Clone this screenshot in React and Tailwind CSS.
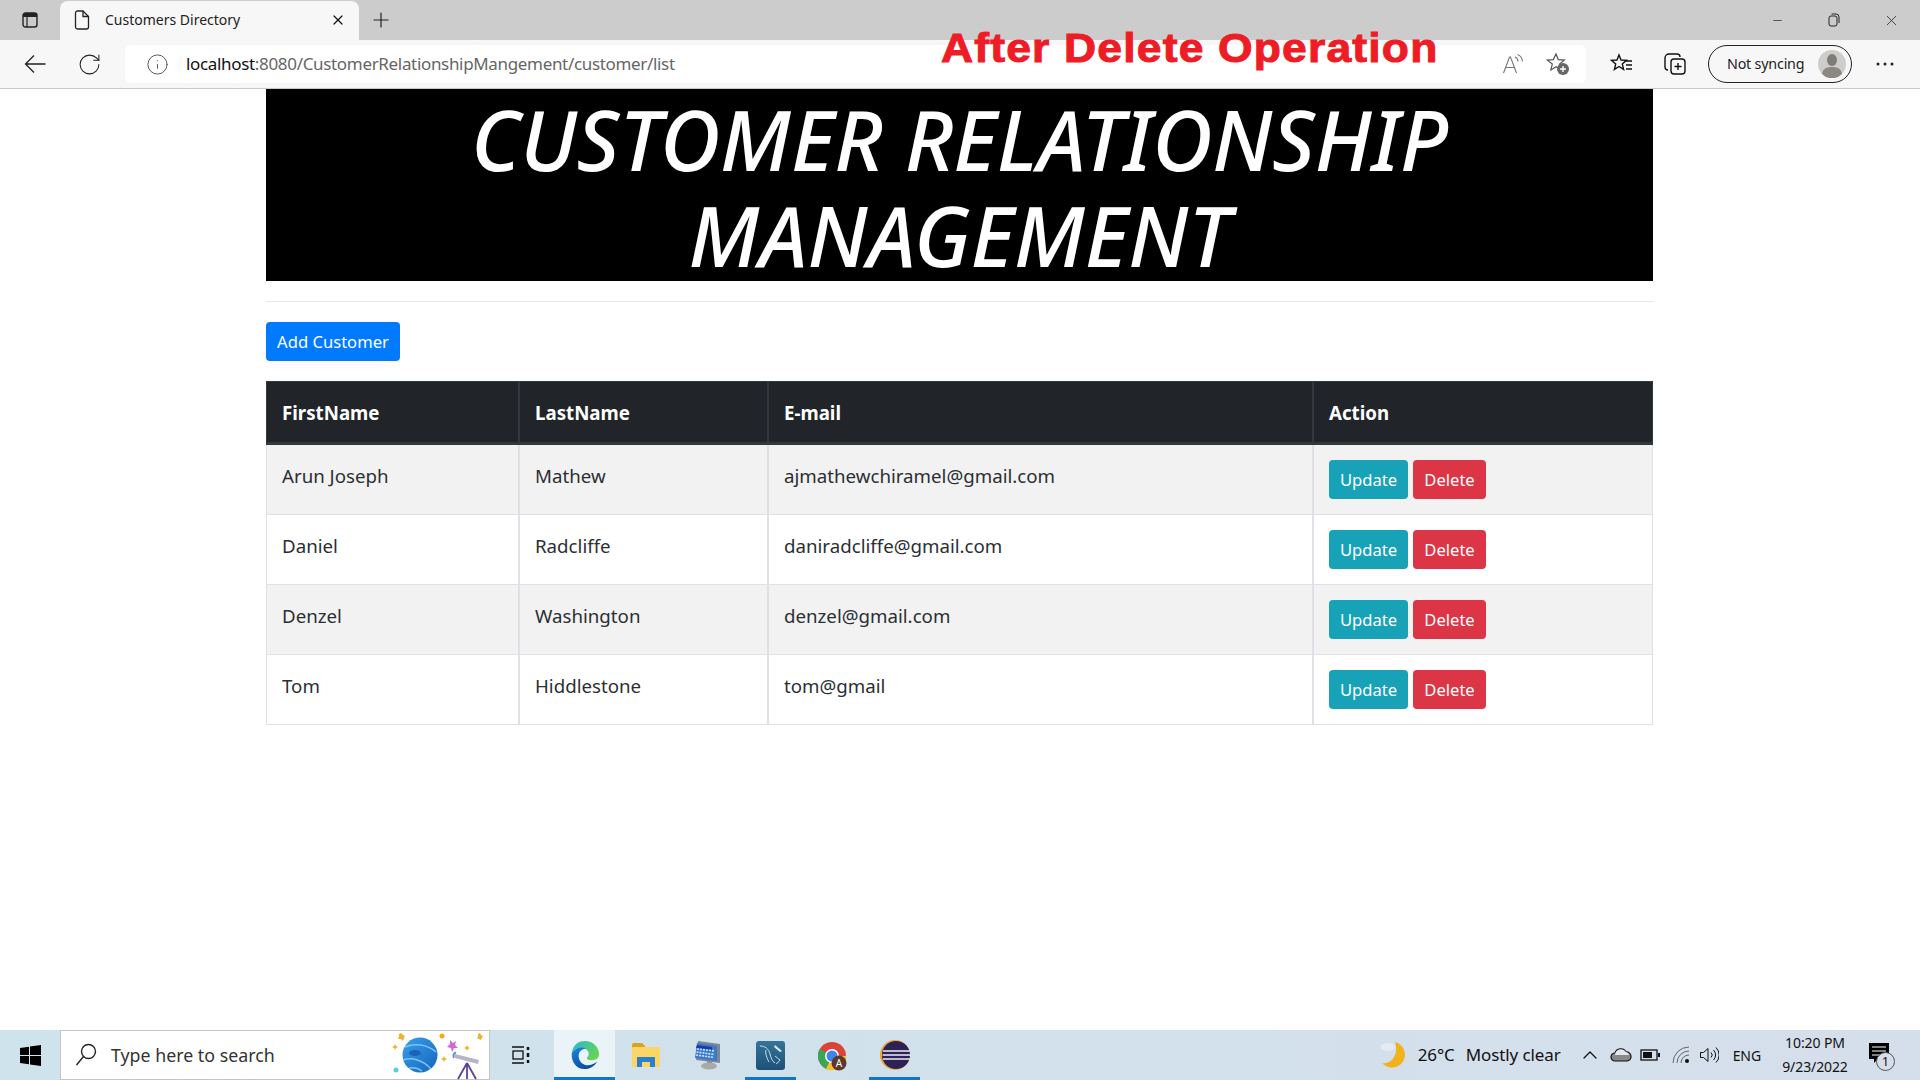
import { RotateCw, Info, X, Plus, Minus, ChevronUp } from 'lucide-react';

const customers = [
  { first: 'Arun Joseph', last: 'Mathew', email: 'ajmathewchiramel@gmail.com' },
  { first: 'Daniel', last: 'Radcliffe', email: 'daniradcliffe@gmail.com' },
  { first: 'Denzel', last: 'Washington', email: 'denzel@gmail.com' },
  { first: 'Tom', last: 'Hiddlestone', email: 'tom@gmail' },
];

function PageIcon() {
  return (
    <svg width="16" height="20" viewBox="0 0 16 20" fill="none" stroke="#222" strokeWidth="1.3">
      <path d="M1.500 3a2 2 0 0 1 2-2h5.500l5.500 5.500V17a2 2 0 0 1-2 2h-9a2 2 0 0 1-2-2z" />
      <path d="M9 1v5.500h5.500" />
    </svg>
  );
}

function SidebarIcon() {
  return (
    <svg width="16" height="16" viewBox="0 0 16 16" fill="none">
      <rect x="1" y="1" width="14" height="14" rx="2.500" stroke="#222" strokeWidth="1.400" />
      <path d="M1 3.500a2.500 2.500 0 0 1 2.500-2.500h9A2.500 2.500 0 0 1 15 3.500V5H1z" fill="#222" />
      <path d="M5 5v10" stroke="#222" strokeWidth="1.200" />
    </svg>
  );
}

function TitleBar() {
  return (
    <div className="flex h-10 items-end bg-[#cccccc]">
      <div className="flex h-10 w-[60px] items-center justify-center">
        <SidebarIcon />
      </div>
      <div className="flex h-[39px] w-[299px] items-center rounded-t-lg bg-[#f7f7f7] pb-[2px] pl-[14px] pr-[13px]">
        <PageIcon />
        <span className="ml-[15px] flex-1 text-[14px] text-[#222]">Customers Directory</span>
        <X size={16} color="#111" strokeWidth={1.8} />
      </div>
      <div className="flex h-10 w-[44px] items-center justify-center">
        <Plus size={24} color="#222" strokeWidth={1.200} />
      </div>
      <div className="flex-1" />
      <div className="flex h-10 items-center">
        <div className="flex w-[58px] justify-center">
          <Minus size={13} color="#222" strokeWidth={1.300} />
        </div>
        <div className="flex w-[58px] justify-center pr-[2px]">
          <svg width="12" height="14" viewBox="0 0 12 14" fill="none" stroke="#222" strokeWidth="1">
            <rect x="1" y="3" width="8" height="10" rx="2" />
            <path d="M3.500 1h4.500a3 3 0 0 1 3 3v6" />
          </svg>
        </div>
        <div className="flex w-[56px] justify-center pr-[2px]">
          <X size={17} color="#222" strokeWidth={1.100} />
        </div>
      </div>
    </div>
  );
}

function Toolbar() {
  return (
    <div className="relative flex h-[49px] items-center border-b border-b-[#c9c9c9] bg-[#f7f7f7]">
      <div className="flex w-[125px] items-center pl-[24px]">
        <svg width="22" height="20" viewBox="0 0 22 20" fill="none" stroke="#222" strokeWidth="1.300">
          <path d="M21.500 10H1.500M10 1.500 1.500 10l8.500 8.500" />
        </svg>
        <RotateCw size={25} color="#222" strokeWidth={1} className="ml-[31px]" />
      </div>
      <div className="flex h-[38px] w-[1461px] items-center rounded-md bg-white pl-[21px] pr-[16px]">
        <Info size={23} color="#555" strokeWidth={1} />
        <span className="ml-[17px] flex-1 text-[17px] tracking-[-0.33px] text-[#666]">
          <span className="text-[#111]">localhost</span>:8080/CustomerRelationshipMangement/customer/list
        </span>
        <svg width="22" height="22" viewBox="0 0 22 22" fill="none" stroke="#777" strokeWidth="1.100">
          <path d="M1.500 20 7.500 4h1l6 16M4 14.500h9" />
          <path d="M13 4a5 5 0 0 1 3 4.500M15.500 1.500a8 8 0 0 1 5 7" />
        </svg>
        <svg width="24" height="24" viewBox="0 0 24 24" fill="none" className="ml-[22px]">
          <path d="M10 2l2.300 5.600 6 .5-4.600 3.900 1.400 5.900-5.100-3.100-5.100 3.100 1.400-5.900L1.300 8.100l6-.5z" stroke="#555" strokeWidth="1.200" />
          <circle cx="17" cy="17" r="6" fill="#666" />
          <path d="M17 14v6M14 17h6" stroke="#fff" strokeWidth="1.400" />
        </svg>
      </div>
      <div className="flex flex-1 items-center pl-[24px]">
        <svg width="24" height="24" viewBox="0 0 24 24" fill="none" stroke="#111" strokeWidth="1.400">
          <path d="M9 3l2 5 5.500.4-4.200 3.500 1.300 5.500L9 14.500l-4.600 2.900 1.300-5.500L1.500 8.400 7 8z" />
          <path d="M16 9h6M16 13h6M16 17h6" />
        </svg>
        <svg width="24" height="24" viewBox="0 0 24 24" fill="none" stroke="#111" strokeWidth="1.400" className="ml-[29px]">
          <rect x="8" y="7" width="14" height="15" rx="3" />
          <path d="M15 11v7M11.500 14.500h7" />
          <path d="M5 18a3 3 0 0 1-3-3V6a4 4 0 0 1 4-4h8a3 3 0 0 1 3 3" />
        </svg>
        <div className="ml-[21px] flex h-[38px] w-[144px] items-center rounded-full border border-[#222] pl-[18px] pr-[5px]">
          <span className="flex-1 text-[14.300px] tracking-[-0.2px] text-[#222]">Not syncing</span>
          <svg width="28" height="28" viewBox="0 0 28 28">
            <circle cx="14" cy="14" r="14" fill="#cfcdc9" />
            <ellipse cx="14" cy="10" rx="5" ry="6" fill="#7f7b78" />
            <path d="M4 24c1-6 5-7 10-7s9 1 10 7a14 14 0 0 1-20 0z" fill="#8c8884" />
          </svg>
        </div>
        <svg width="18" height="4" viewBox="0 0 18 4" fill="#222" className="ml-[24px]">
          <circle cx="2" cy="2" r="1.500" />
          <circle cx="9" cy="2" r="1.500" />
          <circle cx="16" cy="2" r="1.500" />
        </svg>
      </div>
      {/* caption pasted over the screenshot */}
      <span className="absolute left-[941px] top-[-22px] origin-left scale-x-[1.083] font-['Liberation_Sans',sans-serif] text-[41px] font-bold tracking-[1.1px] text-[#ee1c25] [-webkit-text-stroke:1px_#ee1c25]">
        After Delete Operation
      </span>
    </div>
  );
}

function Table() {
  return (
    <table className="w-full table-fixed border-separate border-spacing-0 text-[18.7px]">
      <colgroup>
        <col className="w-[254px]" />
        <col className="w-[249px]" />
        <col className="w-[545px]" />
        <col />
      </colgroup>
      <thead>
        <tr className="bg-[#212529] text-left text-white">
          {['FirstName', 'LastName', 'E-mail', 'Action'].map((h) => (
            <th
              key={h}
              className="h-[64px] border-t border-r-2 border-b-[3px] border-[#32383e] px-[15px] pt-[2px] font-bold first:border-l last:border-r"
            >
              {h}
            </th>
          ))}
        </tr>
      </thead>
      <tbody className="text-[#2b2f33]">
        {customers.map((c, i) => (
          <tr key={c.email} className={i % 2 === 0 ? 'bg-[#f2f2f2]' : 'bg-white'}>
            <td className="h-[70px] border-r-2 border-b border-l border-[#dee2e6] px-[15px] pb-[6px]">{c.first}</td>
            <td className="h-[70px] border-r-2 border-b border-[#dee2e6] px-[15px] pb-[6px]">{c.last}</td>
            <td className="h-[70px] border-r-2 border-b border-[#dee2e6] px-[15px] pb-[6px]">{c.email}</td>
            <td className="h-[70px] border-r border-b border-[#dee2e6] px-[15px]">
              <div className="flex gap-[5px] text-[16.6px]">
                <a className="flex h-[39px] w-[79px] items-center justify-center rounded bg-[#17a2b8] pt-[1px] text-white">Update</a>
                <a className="flex h-[39px] w-[73px] items-center justify-center rounded bg-[#dc3545] pt-[1px] text-white">Delete</a>
              </div>
            </td>
          </tr>
        ))}
      </tbody>
    </table>
  );
}

function WinLogo() {
  return (
    <svg width="21" height="21" viewBox="0 0 21 21" fill="#000">
      <path d="M0 3l9-1.300V10H0zM10 1.500 21 0v10H10zM0 11h9v8.300L0 18zM10 11h11v10l-11-1.500z" />
    </svg>
  );
}

function SearchArt() {
  return (
    <svg width="100" height="50" viewBox="0 0 100 50">
      <defs>
        <linearGradient id="planet" x1="0" y1="0" x2="1" y2="1">
          <stop offset="0" stopColor="#3aa0ea" />
          <stop offset="1" stopColor="#1565bd" />
        </linearGradient>
      </defs>
      <circle cx="31" cy="25" r="17.500" fill="url(#planet)" />
      <path d="M16 17c9-4 22-3 31 5M14 30c9-3 20 0 28 9M20 38c5-1 9 0 13 3" stroke="#7cc4f5" strokeWidth="1.500" fill="none" />
      <ellipse cx="26" cy="23" rx="6" ry="3" fill="#1a63b5" />
      <path d="M61 10l3 3 3-2-1 4 3 3-4 0-2 4-1-4-4-1 3-3z" fill="#d565d8" />
      <circle cx="7" cy="40" r="2.500" fill="#58d0e6" />
      <circle cx="53" cy="6" r="2.500" fill="#f2a81f" />
      <path d="M12 3l2 2 2 1-1 2-1 3-2-2-3 0 1-3 0-2zM6 14l1 2 2 1-2 1-1 2-1-2-2-1 2-1zM91 3l1 2 2 1-1 2-1 2-2-1-2-1 1-2 0-2zM78 15l1 2 2 1-2 1-1 2-1-2-2-1 2-1zM55 26l1 2 2 1-2 1-1 2-1-2-2-1 2-1z" fill="#eeb430" />
      <path d="M66 24l24 6-1 4-23-6z" fill="#b7b3c9" />
      <path d="M67 23a2 3 0 0 0-2 5" stroke="#5a8fd0" strokeWidth="2" fill="none" />
      <path d="M78 33 69 49M78 33v16M78 33l9 16" stroke="#5b42a0" strokeWidth="1.800" />
    </svg>
  );
}

function Edge() {
  return (
    <svg width="30" height="30" viewBox="0 0 34 34">
      <defs>
        <linearGradient id="edgeA" x1="0" y1="0" x2="1" y2="0.600">
          <stop offset="0" stopColor="#2bb7cf" />
          <stop offset="1" stopColor="#66d455" />
        </linearGradient>
        <linearGradient id="edgeB" x1="0" y1="0" x2="0.500" y2="1">
          <stop offset="0" stopColor="#1b85dc" />
          <stop offset="1" stopColor="#0b4f9e" />
        </linearGradient>
      </defs>
      <path d="M2 15C3 6 9 1 17 1c9 0 16 7 16 15 0 5-4 7-8 7-3 0-6-1-6-3 3-2 3-6 0-9-5-4-13-3-17 4z" fill="url(#edgeA)" />
      <path d="M2 15c4-7 12-8 16-5-6 0-9 5-8 10 1 6 7 10 14 8 3-1 5-2 7-4-3 6-9 9-15 9C8 33 1 25 2 15z" fill="url(#edgeB)" />
    </svg>
  );
}

function Folder() {
  return (
    <svg width="28" height="24" viewBox="0 0 28 24">
      <path d="M0 2a2 2 0 0 1 2-2h8l3 3v2H0z" fill="#dba11f" />
      <rect x="0" y="4" width="28" height="20" rx="1" fill="#fbd666" />
      <path d="M5 24V14h18v10h-5v-5h-8v5z" fill="#2a80cf" />
    </svg>
  );
}

function Workbench() {
  return (
    <svg width="30" height="30" viewBox="0 0 30 30">
      <path d="M7 1l22 3v19L5 20z" fill="#7d8793" />
      <path d="M6 3l20 3v15L4 18z" fill="#3b78cc" />
      <path d="M6 5l15 2v3L5 8z" fill="#1a3ca8" />
      <path d="M6 9l18 2M5.500 12l18 2.500M5 15l18 2.500" stroke="#cfe3fa" strokeWidth="1.600" strokeDasharray="2 1" />
      <path d="M16 21h5v3h-5z" fill="#8c8c8c" />
      <ellipse cx="18" cy="26" rx="8" ry="3.500" fill="#a9a9a9" />
    </svg>
  );
}

function Mysql() {
  return (
    <svg width="29" height="29" viewBox="0 0 29 29">
      <defs>
        <linearGradient id="mysqlBg" x1="0" y1="0" x2="0" y2="1">
          <stop offset="0" stopColor="#35749a" />
          <stop offset="1" stopColor="#1c5177" />
        </linearGradient>
      </defs>
      <rect width="29" height="29" rx="3" fill="url(#mysqlBg)" />
      <path d="M4 5c5 0 9 3 10 8 1 4 2 7 5 9M10 9c-1 4 1 8 3 12M19 15c2 1 3 3 5 4-1 2-3 3-4 4" stroke="#cfdfe9" strokeWidth="1" fill="none" />
      <path d="M19 4l7 6-2 1-6-5z" fill="#dce8ef" />
    </svg>
  );
}

function Chrome() {
  return (
    <svg width="36" height="36" viewBox="0 0 36 36">
      <circle cx="15" cy="15" r="14" fill="#db4437" />
      <path d="M15 15 3 22a14 14 0 0 1 0-14z" fill="#34a853" />
      <path d="M3 22l12-7-6 13a14 14 0 0 1-6-6z" fill="#34a853" />
      <path d="M15 15h14a14 14 0 0 1-20 13z" fill="#fbc02d" />
      <circle cx="15" cy="15" r="7" fill="#fff" />
      <circle cx="15" cy="15" r="5.500" fill="#3f84ec" />
      <circle cx="22" cy="22" r="7.500" fill="#5b3a2e" />
      <text x="22" y="26" fontSize="10" fill="#fff" textAnchor="middle" fontFamily="Noto Sans, sans-serif">A</text>
    </svg>
  );
}

function Eclipse() {
  return (
    <svg width="30" height="30" viewBox="0 0 30 30">
      <circle cx="15" cy="15" r="15" fill="#eda23a" />
      <circle cx="16" cy="15" r="14" fill="#2c2255" />
      <path d="M3 11h27M2.500 15h28M3 19h27" stroke="#eeeef5" strokeWidth="1.400" />
    </svg>
  );
}

function AppSlot({ children, open, active, className }) {
  return (
    <div className={`relative flex h-[50px] items-center justify-center ${active ? 'bg-[#eaf3f8]' : ''} ${className}`}>
      {children}
      {open && <div className="absolute bottom-0 left-0 right-0 h-[3px] bg-[#0a78d2]" />}
    </div>
  );
}

function Taskbar() {
  return (
    <div className="flex h-[50px] items-center bg-gradient-to-r from-[#cee3ec] to-[#d5dfeb] text-[#111]">
      <div className="flex h-full w-[60px] items-center justify-center">
        <WinLogo />
      </div>
      <div className="flex h-full w-[430px] items-center border border-[#c4c4c4] bg-white pl-[14px]">
        <svg width="22" height="24" viewBox="0 0 22 24" fill="none" stroke="#222" strokeWidth="1.400">
          <circle cx="13.500" cy="8.500" r="7" />
          <path d="M8.500 13.500 1.500 22" />
        </svg>
        <span className="ml-[14px] flex-1 text-[17.800px] text-[#333]">Type here to search</span>
        <SearchArt />
      </div>
      <div className="flex w-[64px] justify-center pr-[3px]">
        <svg width="20" height="20" viewBox="0 0 20 20" fill="none" stroke="#111" strokeWidth="1.300">
          <path d="M1 2h12M1 18h12" />
          <rect x="2" y="6" width="10" height="8" />
          <path d="M17 2v3M17 8v4M17 15v3" strokeWidth="2.500" />
        </svg>
      </div>
      <AppSlot open active className="w-[61px]"><Edge /></AppSlot>
      <AppSlot className="w-[62px]"><Folder /></AppSlot>
      <AppSlot className="w-[62px]"><div className="pr-[4px]"><Workbench /></div></AppSlot>
      <AppSlot open className="mx-[6px] w-[51px]"><Mysql /></AppSlot>
      <AppSlot className="w-[61px]"><div className="pl-[4px] pt-[7px]"><Chrome /></div></AppSlot>
      <AppSlot open className="mx-[6px] w-[51px]"><Eclipse /></AppSlot>
      <div className="flex-1" />
      <svg width="28" height="30" viewBox="0 0 28 30">
        <path d="M15 2a13 13 0 1 1-13 21c10 2 17-9 13-21z" fill="#f2b21c" />
        <ellipse cx="8" cy="7" rx="7" ry="4" fill="#e4ebf3" />
      </svg>
      <span className="ml-[10px] text-[17px] tracking-[-0.1px]">26°C</span>
      <span className="ml-[11px] text-[17px] tracking-[-0.1px]">Mostly clear</span>
      <ChevronUp size={24} color="#111" strokeWidth={1.300} className="ml-[17px]" />
      <svg width="22" height="16" viewBox="0 0 22 16" className="ml-[8px]">
        <path d="M5 14a4 4 0 0 1 0-8 6 6 0 0 1 11-1 4.500 4.500 0 0 1 1 9z" fill="#888" stroke="#111" strokeWidth="1.200" />
        <path d="M5 8a6 6 0 0 1 11-3 4 4 0 0 1 3 3z" fill="#e4e7ec" />
      </svg>
      <svg width="20" height="12" viewBox="0 0 20 12" className="ml-[8px]">
        <rect x="1" y="1" width="16" height="10" fill="none" stroke="#111" strokeWidth="1.300" />
        <rect x="3" y="3" width="9" height="6" fill="#111" />
        <rect x="18" y="4" width="2" height="4" fill="#111" />
      </svg>
      <svg width="18" height="18" viewBox="0 0 18 18" fill="none" stroke="#666" strokeWidth="1" className="ml-[12px]">
        <path d="M1 17A16 16 0 0 1 17 1M5 17A12 12 0 0 1 17 5M9 17a8 8 0 0 1 8-8" />
        <circle cx="15" cy="15" r="2" fill="#111" stroke="none" />
      </svg>
      <svg width="20" height="20" viewBox="0 0 20 20" fill="none" stroke="#111" strokeWidth="1" className="ml-[9px]">
        <path d="M1.500 7.500h3L9 3.500v13l-4.500-4h-3z" />
        <path d="M12 7.500a3.500 3.500 0 0 1 0 5M14.500 5a7 7 0 0 1 0 10M17 2.500a10.500 10.500 0 0 1 0 15" />
      </svg>
      <span className="ml-[14px] text-[14px] tracking-[-0.1px]">ENG</span>
      <div className="ml-[16px] flex w-[76px] flex-col items-center text-[14px] leading-[24px] tracking-[-0.1px]">
        <span>10:20 PM</span>
        <span>9/23/2022</span>
      </div>
      <div className="relative ml-[16px] mr-[25px] h-[24px] w-[26px]">
        <svg width="20" height="20" viewBox="0 0 20 20">
          <path d="M0 0h20v16H9l-4 4v-4H0z" fill="#000" />
          <path d="M3 4h14M3 8h14M3 12h9" stroke="#fff" strokeWidth="1" />
        </svg>
        <span className="absolute bottom-[-4px] right-[0px] flex h-[19px] w-[19px] items-center justify-center rounded-full border border-[#555] bg-[#d5dfeb] text-[13px] leading-none">1</span>
      </div>
    </div>
  );
}

export default function App() {
  return (
    <div className="flex h-screen flex-col bg-white font-['Noto_Sans',sans-serif]">
      <TitleBar />
      <Toolbar />
      <main className="flex-1">
        <div className="ml-[266px] w-[1387px]">
          <h1 className="flex h-[192px] items-center justify-center bg-black pt-[3px] text-center text-[83px] leading-[96px] font-medium italic text-white">
            <span>
              CUSTOMER RELATIONSHIP
              <br />
              MANAGEMENT
            </span>
          </h1>
          <hr className="mt-[20px] border-[#e6e6e6]" />
          <a className="mt-[20px] flex h-[39px] w-[134px] items-center justify-center rounded bg-[#007bff] pt-[1px] text-[16.6px] text-white">
            Add Customer
          </a>
          <div className="mt-[20px]">
            <Table />
          </div>
        </div>
      </main>
      <Taskbar />
    </div>
  );
}
